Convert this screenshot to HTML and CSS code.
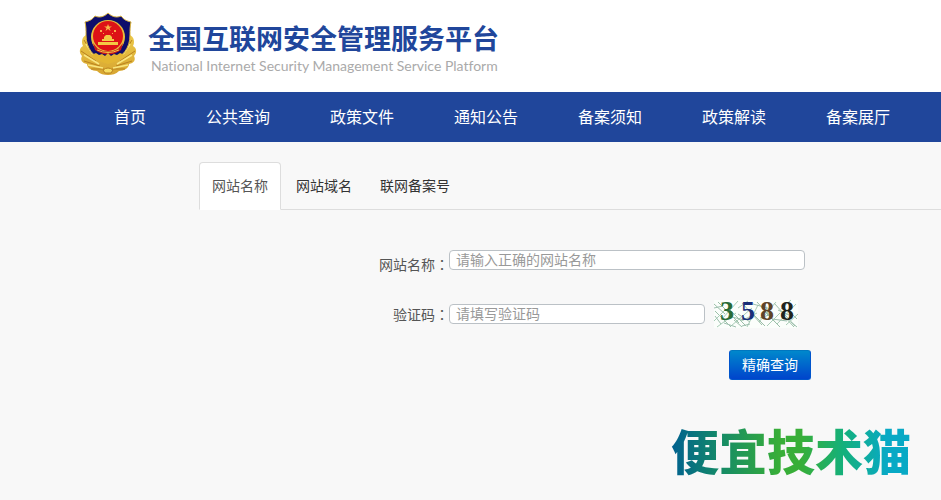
FILE: index.html
```html
<!DOCTYPE html>
<html lang="zh-CN">
<head>
    <meta charset="UTF-8">
    <title>全国互联网安全管理服务平台</title>
    <link rel="stylesheet" href="styles.css">
</head>
<body>
    <header class="header">
        <svg class="emblem" viewBox="0 0 58 64" aria-hidden="true">
            <defs>
                <linearGradient id="gold" x1="0" y1="0" x2="0" y2="1">
                    <stop offset="0" stop-color="#ecc94a"/>
                    <stop offset="1" stop-color="#d7a530"/>
                </linearGradient>
            </defs>
            <!-- wreath -->
            <path d="M7 23 C3 25 2 30 4 34 C0 36 0 41 3 44 C1 48 3 51 8 52 C8 56 13 59 18 59 C21 62 25 63 29 63 C33 63 37 62 40 59 C45 59 50 56 50 52 C55 51 57 48 55 44 C58 41 58 36 54 34 C56 30 55 25 51 23 L44 42 L29 50 L14 42 Z" fill="url(#gold)"/>
            <path d="M5 28 L13 41 M2 39 L17 49 M5 49 L21 54 M12 57 L25 57 M53 28 L45 41 M56 39 L41 49 M53 49 L37 54 M46 57 L33 57" fill="none" stroke="#b98220" stroke-width="1"/>
            <path d="M7 32 L15 44 M5 43 L20 52 M9 53 L24 56 M51 32 L43 44 M53 43 L38 52 M49 53 L34 56" fill="none" stroke="#f9e680" stroke-width="1.500"/>
            <!-- shield -->
            <path d="M29 1 C25 5 20 6 16 4 C13 8 10 9 6 10 C7 14 7 18 7 23 C7 36 14 46 29 50 C44 46 51 36 51 23 C51 18 51 14 52 10 C48 9 45 8 42 4 C38 6 33 5 29 1 Z" fill="#0d0d6b" stroke="#d9b33c" stroke-width="1"/>
            <circle cx="29" cy="25" r="17" fill="#e7bd3b"/>
            <circle cx="29" cy="24" r="15" fill="#dd1216"/>
            <path d="M29 12 L30 14.500 L33 14.500 L30.500 16 L31.500 19 L29 17 L26.500 19 L27.500 16 L25 14.500 L28 14.500 Z" fill="#f9b84a"/>
            <path d="M21 18 h2 v2 h-2 Z M35 18 h2 v2 h-2 Z M24 21 h1 v1 h-1 Z M33 21 h1 v1 h-1 Z" fill="#f9a84a"/>
            <path d="M25 25 L27 23 H31 L33 25 V27 H35 V29 H23 V27 H25 Z M19 30 H39 V33 H19 Z" fill="#f3c944"/>
            <path d="M14 31 L19 37 Q29 42 39 37 L44 31 L42 38 Q29 47 16 38 Z" fill="#c8191a"/>
            <path d="M18 38 Q29 43 40 38" fill="none" stroke="#f3c944" stroke-width="1"/>
            <path d="M12 43 L17 41 L20 43 L23 42 L26 44 L29 41 L32 44 L35 42 L38 43 L41 41 L46 43 L38 49 L29 52 L20 49 Z" fill="#e3b633"/>
            <path d="M24 58 Q29 54 34 58 L32 61 H26 Z" fill="#f6dd62" stroke="#b98220" stroke-width="1"/>
        </svg>
        <div class="brand">
            <h1>全国互联网安全管理服务平台</h1>
            <p>National Internet Security Management Service Platform</p>
        </div>
    </header>

    <nav class="nav">
        <a href="#">首页</a>
        <a href="#">公共查询</a>
        <a href="#">政策文件</a>
        <a href="#">通知公告</a>
        <a href="#">备案须知</a>
        <a href="#">政策解读</a>
        <a href="#">备案展厅</a>
    </nav>

    <main class="main">
        <div class="tabs" role="tablist">
            <button type="button" class="tab active" role="tab" aria-selected="true">网站名称</button>
            <button type="button" class="tab" role="tab" aria-selected="false">网站域名</button>
            <button type="button" class="tab" role="tab" aria-selected="false">联网备案号</button>
        </div>

        <form class="search-form">
            <div class="row">
                <label class="label-low" for="siteName">网站名称<span lang="zh-TW" class="colon">：</span></label>
                <input type="text" id="siteName" class="input-long" placeholder="请输入正确的网站名称">
            </div>
            <div class="row">
                <label for="code">验证码<span lang="zh-TW" class="colon">：</span></label>
                <input type="text" id="code" class="input-short" placeholder="请填写验证码">
                <svg class="captcha" viewBox="0 0 84 28" role="img" aria-label="验证码">
                    <rect width="84" height="28" fill="#fbfefb"/>
                    <g fill="none" stroke-width="1">
                        <path d="M0 4 L11 14 M1 11 L17 27 M4 2 L25 23 M14 8 L32 26 M20 20 L28 27 M28 3 L48 25 M37 12 L51 26 M43 2 L62 23 M51 12 L66 27 M60 3 L81 26 M69 15 L80 27 M76 12 L83 19" stroke="#9cbfa9"/>
                        <path d="M0 21 L12 9 M3 27 L22 13 M8 19 L24 1 M17 26 L38 8 M27 21 L43 13 M33 27 L44 5 M45 22 L62 2 M53 26 L66 13 M63 24 L82 4 M72 25 L84 14 M24 8 L34 1 M67 9 L77 0" stroke="#a9cdb7"/>
                        <path d="M1 16 L7 24 M10 23 L22 27 M14 16 L30 20 M24 14 L36 22 M28 26 L36 24 M39 4 L57 9 M46 18 L58 14 M51 4 L55 16 M58 19 L73 21 M64 10 L75 15 M0 8 L9 6 M77 22 L83 27" stroke="#9dbfae"/>
                    </g>
                    <g class="captcha-digits">
                        <text x="6" y="20" fill="#286b35">3</text>
                        <text x="27" y="20" fill="#192f78">5</text>
                        <text x="46" y="20" fill="#5f4527">8</text>
                        <text x="66" y="20" fill="#20251d">8</text>
                    </g>
                </svg>
            </div>
            <div class="actions">
                <button type="submit" class="submit">精确查询</button>
            </div>
        </form>
    </main>

    <footer class="footer">
        <span class="signature">便宜技术猫</span>
    </footer>
</body>
</html>
```
FILE: styles.css
```css
* {
    box-sizing: border-box;
}

body {
    margin: 0;
    background-color: #f8f8f8;
    font-family: "Noto Sans CJK SC", sans-serif;
    font-size: 14px;
    line-height: 20px;
    color: #555;
}

.header {
    display: flex;
    gap: 11px;
    height: 92px;
    padding: 12px 79px;
    background-color: #fff;
}

.emblem {
    width: 58px;
    height: 64px;
    flex: none;
}

.brand {
    padding-top: 8px;
    white-space: nowrap;
}

.brand h1 {
    margin: 0;
    font-size: 27px;
    line-height: 36px;
    font-weight: 700;
    color: #20469b;
}

.brand p {
    margin: 0;
    padding-left: 3px;
    font-family: Lato, sans-serif;
    font-size: 14px;
    line-height: 20px;
    font-variant-ligatures: none;
    color: #aaa;
}

.nav {
    display: flex;
    gap: 60px;
    padding: 0 50px 2px 114px;
    background-color: #20469b;
}

.nav a {
    color: #fff;
    font-size: 16px;
    line-height: 48px;
    text-decoration: none;
    white-space: nowrap;
}

.main {
    padding: 20px 0 0 199px;
}

.tabs {
    display: flex;
    gap: 2px;
    border-bottom: 1px solid #ddd;
}

.tab {
    height: 48px;
    margin-bottom: -1px;
    padding: 0 12px 2px;
    border: 1px solid transparent;
    border-radius: 4px 4px 0 0;
    background: none;
    font: inherit;
    color: #333;
    cursor: pointer;
}

.tab.active {
    border-color: #ddd;
    border-bottom-color: #fff;
    background-color: #fff;
    color: #555;
}

.search-form {
    width: 612px;
    max-width: 100%;
    padding-top: 40px;
}

.row {
    display: flex;
    align-items: flex-start;
    height: 54px;
}

.row label {
    width: 250px;
    text-align: right;
}

.row .label-low {
    padding-top: 4px;
}

/* the TC face centres the full-width colon */
.colon {
    font-family: "Noto Sans CJK TC", sans-serif;
}

.row input {
    height: 20px;
    padding: 0 6px 2px;
    border: 1px solid #bbc1c6;
    border-radius: 4px;
    background-color: #fff;
    font: inherit;
    line-height: 16px;
    color: #555;
}

.row input::placeholder {
    color: #999;
    opacity: 1;
}

.input-long {
    width: 356px;
}

.input-short {
    width: 256px;
}

.captcha {
    width: 84px;
    height: 28px;
    margin: -4px 0 0 9px;
    overflow: visible;
}

.captcha-digits {
    font-family: "Liberation Serif", serif;
    font-size: 28px;
    font-weight: bold;
}

.actions {
    display: flex;
    justify-content: flex-end;
    margin-top: -8px;
}

.submit {
    height: 30px;
    padding: 0 12px 2px;
    border: 1px solid #0055cc;
    border-top-color: #0077c0;
    border-radius: 3px;
    background: linear-gradient(#0088cc, #0044cc);
    font: inherit;
    color: #fff;
    cursor: pointer;
}

.footer {
    display: flex;
    justify-content: flex-end;
    padding: 41px 30px 0 0;
}

.signature {
    font-size: 48px;
    line-height: 56px;
    font-weight: 900;
    color: transparent;
    background: linear-gradient(90deg, #006090 0%, #148a68 20%, #38ae38 45%, #38ae38 54%, #14b07c 72%, #08a9c5 90%);
    -webkit-background-clip: text;
    background-clip: text;
}
```
